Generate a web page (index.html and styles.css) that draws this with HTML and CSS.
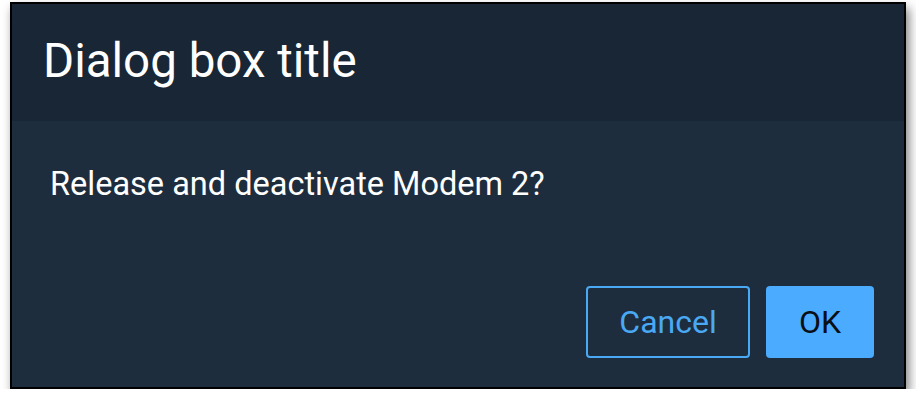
FILE: index.html
```html
<!DOCTYPE html>
<html lang="en">
<head>
    <meta charset="UTF-8">
    <title>Dialog box</title>
    <link rel="stylesheet" href="styles.css">
</head>
<body>
    <div class="dialog">
        <div class="dialog-header">
            <h2 class="dialog-title">Dialog box title</h2>
        </div>
        <div class="dialog-body">
            <p class="dialog-message">Release and deactivate Modem 2?</p>
            <div class="dialog-actions">
                <button class="btn btn-secondary">Cancel</button>
                <button class="btn btn-primary">OK</button>
            </div>
        </div>
    </div>
</body>
</html>
```

FILE: styles.css
```css
body {
    margin: 0;
    background: #ffffff;
    font-family: Roboto, "Noto Sans", sans-serif;
}
.dialog {
    width: 896px;
    height: 387px;
    margin: 2px 0 0 10px;
    box-sizing: border-box;
    border: 2px solid #000000;
    background: #1e2d3d;
    display: flex;
    flex-direction: column;
    box-shadow: 3px 6px 10px rgba(0, 0, 0, 0.5);
}
.dialog-header {
    height: 117px;
    box-sizing: border-box;
    padding: 0 0 4px 31px;
    background: #182635;
    display: flex;
    align-items: center;
}
.dialog-title {
    margin: 0;
    font-size: 47.5px;
    font-weight: 400;
    color: #ffffff;
}
.dialog-body {
    flex: 1;
    display: flex;
    flex-direction: column;
    padding: 0 30px 29px 38px;
}
.dialog-message {
    margin: 0;
    padding-top: 44px;
    font-size: 32.5px;
    color: #ffffff;
}
.dialog-actions {
    margin-top: auto;
    display: flex;
    justify-content: flex-end;
    gap: 16px;
}
.btn {
    height: 72px;
    border-radius: 4px;
    font-family: Roboto, "Noto Sans", sans-serif;
    font-size: 32px;
    padding: 0;
    cursor: pointer;
}
.btn-secondary {
    width: 164px;
    background: transparent;
    border: 2px solid #4aa9f5;
    color: #4aa9f5;
}
.btn-primary {
    width: 108px;
    background: #4aabff;
    border: none;
    color: #0a0f14;
}
```
